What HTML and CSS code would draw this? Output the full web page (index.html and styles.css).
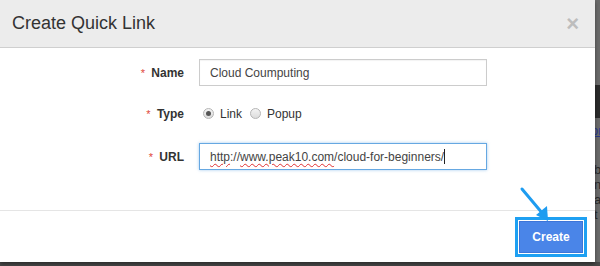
FILE: index.html
```html
<!DOCTYPE html>
<html lang="en">
<head>
  <meta charset="UTF-8" />
  <title>Create Quick Link</title>
  <link rel="stylesheet" href="styles.css">
</head>
<body>
  <div class="screen">
    <div class="modal">
      <div class="modal-header">
        <div class="modal-title">Create Quick Link</div>
        <div class="close">&times;</div>
      </div>
      <div class="modal-body">
        <div class="row">
          <label class="label"><span class="req">*</span> Name</label>
          <div class="field"><input class="input" type="text" value="Cloud Coumputing"></div>
        </div>
        <div class="row">
          <label class="label"><span class="req">*</span> Type</label>
          <div class="field radios">
            <span class="radio checked"></span><span class="opt">Link</span>
            <span class="radio"></span><span class="opt">Popup</span>
          </div>
        </div>
        <div class="row">
          <label class="label"><span class="req">*</span> URL</label>
          <div class="field"><div class="input focus"><span class="typo">http</span>://<span class="typo">www.peak10.com</span>/cloud-for-beginners/<span class="caret"></span></div></div>
        </div>
      </div>
      <div class="modal-footer">
        <svg class="arrow" width="40" height="40" viewBox="0 0 40 40">
          <line x1="3" y1="3" x2="24" y2="28" stroke="#1e9cf0" stroke-width="3" stroke-linecap="round"/>
          <polygon points="29,35 17,29 28,20" fill="#1e9cf0"/>
        </svg>
        <div class="btn-ring"><button class="btn">Create</button></div>
      </div>
    </div>
    <div class="backdrop">
      <div class="bd-top"></div>
      <div class="bd-band"></div>
      <div class="bd-link">or</div>
      <div class="bd-text">b<br>n<br>a<br>t</div>
    </div>
  </div>
</body>
</html>
```

FILE: styles.css
```css
html, body {
  margin: 0;
  padding: 0;
  height: 266px;
  overflow: hidden;
  background: #474747;
  font-family: "Liberation Sans", Arial, sans-serif;
}
.screen {
  display: grid;
  grid-template-columns: 595px 1fr;
  height: 262px;
}
.modal {
  background: white;
  display: flex;
  flex-direction: column;
  position: relative;
  box-shadow: 0 2px 4px rgba(0,0,0,0.4);
}
.modal-header {
  height: 47px;
  background: #ececec;
  border-bottom: 1px solid #cfcfcf;
  display: flex;
  align-items: center;
  justify-content: space-between;
  padding: 0 16px 0 12px;
}
.modal-title {
  font-size: 18px;
  color: #333;
}
.close {
  font-size: 22px;
  font-weight: bold;
  color: #bdbdbd;
  line-height: 1;
}
.modal-body {
  height: 162px;
  padding-top: 11px;
  box-sizing: border-box;
  display: flex;
  flex-direction: column;
  gap: 14px;
}
.row {
  display: flex;
  align-items: center;
  min-height: 27px;
}
.label {
  width: 184px;
  text-align: right;
  font-size: 12px;
  font-weight: bold;
  color: #333;
  box-sizing: border-box;
}
.req {
  color: #e0473a;
  font-weight: normal;
  font-size: 11px;
  margin-right: 3px;
}
.field {
  margin-left: 15px;
  width: 288px;
}
.input {
  box-sizing: border-box;
  width: 288px;
  height: 27px;
  border: 1px solid #ccc;
  padding: 0 10px;
  font-family: "Liberation Sans", Arial, sans-serif;
  font-size: 12px;
  color: #444;
  box-shadow: inset 0 1px 1px rgba(0,0,0,0.05);
  outline: none;
  display: flex;
  align-items: center;
}
.input.focus {
  border-color: #66a8e2;
  box-shadow: 0 0 3px rgba(102,168,226,0.6);
}
.row:last-child {
  margin-top: 2px;
}
.typo {
  text-decoration: underline wavy #e03030;
  text-decoration-thickness: 1px;
  text-underline-offset: 2px;
}
.caret {
  display: inline-block;
  width: 1px;
  height: 15px;
  background: #222;
}
.radios {
  display: flex;
  align-items: center;
  font-size: 12px;
  color: #333;
  padding-left: 4px;
}
.radio {
  width: 11px;
  height: 11px;
  border-radius: 50%;
  border: 1px solid #b5b5b5;
  background: linear-gradient(#f4f4f4, #dcdcdc);
  box-sizing: border-box;
  display: inline-flex;
  align-items: center;
  justify-content: center;
  margin-right: 6px;
}
.radio.checked::after {
  content: "";
  width: 5px;
  height: 5px;
  border-radius: 50%;
  background: #555;
}
.opt {
  margin-right: 8px;
}
.modal-footer {
  flex: 1;
  border-top: 1px solid #e5e5e5;
  display: flex;
  justify-content: flex-end;
  align-items: flex-start;
  padding: 6px 8px 0 0;
  position: relative;
}
.arrow {
  position: absolute;
  left: 519px;
  top: -25px;
}
.btn-ring {
  border: 3px solid #1ea0f2;
  padding: 1px;
  background: white;
}
.btn {
  width: 64px;
  height: 32px;
  background: #4a85e8;
  border: 1px solid #3d74d8;
  color: white;
  font-family: "Liberation Sans", Arial, sans-serif;
  font-size: 12px;
  font-weight: bold;
  display: block;
}
.backdrop {
  background: #6a6a6a;
  overflow: hidden;
  font-size: 13px;
  color: #2a2a2a;
}
.bd-top {
  height: 85px;
}
.bd-band {
  height: 33px;
  background: #2b2b2b;
}
.bd-link {
  color: #2a3a8a;
  text-decoration: underline;
  margin-top: 5px;
  margin-left: -4px;
}
.bd-text {
  margin-top: 24px;
  line-height: 15px;
  margin-left: -1px;
}
```
